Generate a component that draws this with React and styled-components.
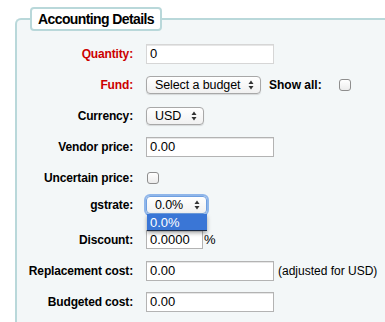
import React from 'react';
import styled, { createGlobalStyle } from 'styled-components';

const GlobalStyle = createGlobalStyle`
  html, body {
    margin: 0;
    padding: 0;
    background: #fff;
    overflow: hidden;
  }
  body {
    font-family: "Liberation Sans", Arial, sans-serif;
    color: #000;
  }
`;

const Fieldset = styled.fieldset`
  margin: 7px 0 0 15px;
  padding: 0;
  width: 370px;
  height: 315px;
  border: 2px solid #b9d8da;
  border-right: none;
  border-bottom: none;
  border-top-left-radius: 6px;
  background: #f3f7f8;
  box-sizing: border-box;
`;

const Legend = styled.legend`
  margin-left: 13px;
  padding: 0 6px;
  height: 24px;
  line-height: 20px;
  box-sizing: border-box;
  background: #fff;
  border: 2px solid #b9d8da;
  border-radius: 4px;
  font-size: 14px;
  font-weight: bold;
  letter-spacing: -0.6px;
`;

const List = styled.ol`
  list-style: none;
  margin: 0;
  padding: 7px 0 0 0;
`;

const Row = styled.li`
  display: flex;
  align-items: center;
  height: 31px;
  box-sizing: border-box;
  padding-bottom: ${p => (p.$raise ? '8px' : '0')};
`;

const Label = styled.label`
  width: 116px;
  margin-right: 13px;
  text-align: right;
  font-size: 12px;
  font-weight: bold;
  letter-spacing: -0.15px;
  color: ${p => (p.$required ? '#cc0000' : '#000')};
`;

const InlineLabel = styled.span`
  margin: 0 17px 0 8px;
  font-size: 12px;
  font-weight: bold;
`;

const TextInput = styled.span`
  display: inline-flex;
  align-items: center;
  width: ${p => p.$w || 128}px;
  height: ${p => p.$h || 20}px;
  box-sizing: border-box;
  padding-left: 3px;
  background: #fff;
  border: 1px solid ${p => (p.$light ? '#d6d6d6' : '#b3b3b3')};
  box-shadow: inset 0 1px 0 #e6e6e6;
  font-size: 13px;
`;

const Note = styled.span`
  margin-left: ${p => p.$gap || 4}px;
  font-size: ${p => p.$size || 12}px;
`;

const SelectWrap = styled.span`
  position: relative;
  display: inline-block;
`;

const Select = styled.span`
  display: inline-flex;
  align-items: center;
  justify-content: space-between;
  width: ${p => p.$w}px;
  height: 18px;
  box-sizing: border-box;
  padding: 0 6px 0 8px;
  border: 1px solid ${p => (p.$focus ? '#6f9fe0' : '#a8a8a8')};
  border-radius: 4px;
  background: linear-gradient(#ffffff, #f1f1f1);
  box-shadow: ${p =>
    p.$focus ? '0 0 0 2px rgba(110, 160, 230, 0.75)' : '0 1px 1px rgba(0, 0, 0, 0.12)'};
  font-size: 12.5px;
  letter-spacing: -0.1px;
`;

const Menu = styled.span`
  position: absolute;
  left: 1px;
  top: 19px;
  width: 60px;
  height: 17px;
  box-sizing: border-box;
  padding-left: 3px;
  line-height: 17px;
  background: #3a76d6;
  color: #fff;
  font-size: 13px;
  border-bottom: 1px solid #1b2a44;
  box-shadow: 0 2px 4px rgba(0, 0, 0, 0.35);
  z-index: 2;
`;

const Check = styled.span`
  display: inline-block;
  width: 12px;
  height: 12px;
  box-sizing: border-box;
  border: 1px solid #8e8e8e;
  border-radius: 3px;
  background: linear-gradient(#ffffff, #ececec);
  margin-left: ${p => p.$offset || 0}px;
`;

const Arrows = () => (
  <svg width="6" height="10" viewBox="0 0 6 10">
    <path d="M3 0.5 L5.5 4 L0.5 4 Z" fill="#333" />
    <path d="M3 9.5 L5.5 6 L0.5 6 Z" fill="#333" />
  </svg>
);

const App = () => {
  return (
    <>
      <GlobalStyle />
      <Fieldset>
        <Legend>Accounting Details</Legend>
        <List>
          <Row>
            <Label $required>Quantity:</Label>
            <TextInput $light>0</TextInput>
          </Row>
          <Row>
            <Label $required>Fund:</Label>
            <Select $w={115}>
              Select a budget <Arrows />
            </Select>
            <InlineLabel>Show all:</InlineLabel>
            <Check />
          </Row>
          <Row>
            <Label>Currency:</Label>
            <Select $w={58}>
              USD <Arrows />
            </Select>
          </Row>
          <Row>
            <Label>Vendor price:</Label>
            <TextInput>0.00</TextInput>
          </Row>
          <Row>
            <Label>Uncertain price:</Label>
            <Check $offset={1} />
          </Row>
          <Row $raise>
            <Label>gstrate:</Label>
            <SelectWrap>
              <Select $w={61} $focus>
                0.0% <Arrows />
              </Select>
              <Menu>0.0%</Menu>
            </SelectWrap>
          </Row>
          <Row>
            <Label>Discount:</Label>
            <TextInput $w={57} $h={19}>0.0000</TextInput>
            <Note $gap={1} $size={13}>%</Note>
          </Row>
          <Row>
            <Label>Replacement cost:</Label>
            <TextInput>0.00</TextInput>
            <Note>(adjusted for USD)</Note>
          </Row>
          <Row>
            <Label>Budgeted cost:</Label>
            <TextInput>0.00</TextInput>
          </Row>
        </List>
      </Fieldset>
    </>
  );
};

export default App;
